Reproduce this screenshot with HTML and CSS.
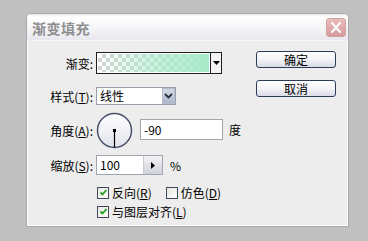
FILE: index.html
```html
<!DOCTYPE html>
<html>
<head>
<meta charset="utf-8">
<link rel="stylesheet" href="styles.css">
</head>
<body>
<div class="dialog">
  <div class="titlebar">
    <span class="title">渐变填充</span>
    <span class="close">
      <svg width="20" height="19" viewBox="0 0 20 19"><path d="M5.5 4.5 L14.5 14.5 M14.5 4.5 L5.5 14.5" stroke="#fff" stroke-width="2.2" stroke-linecap="round"/></svg>
    </span>
  </div>
  <div class="body">
    <div class="form">
      <div class="row r1">
        <span class="label">渐变:</span>
        <span class="grad">
          <span class="swatch"></span>
          <span class="gradarrow"><svg width="7" height="4" viewBox="0 0 7 4"><path d="M0 0 H7 L3.5 4 Z" fill="#000"/></svg></span>
        </span>
      </div>
      <div class="row r2">
        <span class="label">样式(<u>T</u>):</span>
        <span class="select">
          <span class="seltext">线性</span>
          <span class="selbtn"><svg width="9" height="6" viewBox="0 0 9 6"><path d="M1 1 L4.5 4.5 L8 1" fill="none" stroke="#2a2f45" stroke-width="1.8"/></svg></span>
        </span>
      </div>
      <div class="row r3">
        <span class="label">角度(<u>A</u>):</span>
        <svg class="dial" width="37" height="37" viewBox="0 0 37 37">
          <defs>
            <linearGradient id="dg" x1="0" y1="0" x2="0" y2="1">
              <stop offset="0" stop-color="#ffffff"/>
              <stop offset="1" stop-color="#e2e4ec"/>
            </linearGradient>
          </defs>
          <circle cx="18.5" cy="18.5" r="17" fill="url(#dg)" stroke="#4a5068" stroke-width="1.5"/>
          <rect x="17" y="17" width="3" height="3" fill="#000"/>
          <path d="M18.5 18.5 V35.5" stroke="#000" stroke-width="1.2"/>
        </svg>
        <span class="input angle">-90</span>
        <span class="unit">度</span>
      </div>
      <div class="row r4">
        <span class="label">缩放(<u>S</u>):</span>
        <span class="scale">
          <span class="scaletext">100</span>
          <span class="scalebtn"><svg width="4" height="7" viewBox="0 0 4 7"><path d="M0 0 L4 3.5 L0 7 Z" fill="#000"/></svg></span>
        </span>
        <span class="pct">%</span>
      </div>
      <div class="row r5">
        <span class="label"></span>
        <span class="check on"><svg width="9" height="9" viewBox="0 0 9 9"><path d="M1.5 4.5 L3.5 6.5 L7.5 2" fill="none" stroke="#22a022" stroke-width="1.8"/></svg></span>
        <span class="ctext">反向(<u>R</u>)</span>
        <span class="check off"></span>
        <span class="ctext">仿色(<u>D</u>)</span>
      </div>
      <div class="row r6">
        <span class="label"></span>
        <span class="check on"><svg width="9" height="9" viewBox="0 0 9 9"><path d="M1.5 4.5 L3.5 6.5 L7.5 2" fill="none" stroke="#22a022" stroke-width="1.8"/></svg></span>
        <span class="ctext">与图层对齐(<u>L</u>)</span>
      </div>
    </div>
    <div class="buttons">
      <span class="btn">确定</span>
      <span class="btn second">取消</span>
    </div>
  </div>
</div>
</body>
</html>
```

FILE: styles.css
```css
html, body {
  margin: 0;
  padding: 0;
}
body {
  width: 368px;
  height: 241px;
  background: #c0c0c0;
  font-family: "Noto Sans CJK SC", "DejaVu Sans", sans-serif;
  font-size: 12px;
  color: #000;
  padding: 13px 0 0 26px;
  box-sizing: border-box;
  overflow: hidden;
}
.dialog {
  width: 323px;
  height: 214px;
  box-sizing: border-box;
  border: 1px solid #a9a9ab;
  border-radius: 5px 5px 0 0;
  background: #ececec;
  display: flex;
  flex-direction: column;
}
.titlebar {
  height: 26px;
  flex: none;
  display: flex;
  align-items: center;
  justify-content: space-between;
  padding: 0 2px 0 5px;
  border-radius: 4px 4px 0 0;
  background: linear-gradient(#ececef 0px, #fefefe 3px, #f7f7f9 12px, #e8e8ee 26px);
}
.title {
  font-size: 14px;
  font-weight: bold;
  color: #8e8e8e;
  letter-spacing: 0.5px;
  line-height: 16px;
  margin-top: 1px;
}
.close {
  width: 20px;
  height: 19px;
  box-sizing: border-box;
  border-radius: 3px;
  background: linear-gradient(#ebbcbc, #d89a9a);
  border: 1px solid #d0a2a2;
  display: flex;
  align-items: center;
  justify-content: center;
  margin-top: 1px;
}
.close svg { display: block; }
.body {
  flex: 1;
  display: flex;
  border-left: 1px solid #ffffff;
  border-right: 1px solid #ffffff;
  border-bottom: 1px solid #ffffff;
  border-top: 1px solid #f6f6f6;
  background: #ededed;
}
.form {
  display: flex;
  flex-direction: column;
  padding-top: 11px;
}
.row {
  display: flex;
  align-items: center;
}
.label {
  width: 65px;
  text-align: right;
  padding-right: 3px;
  flex: none;
  white-space: nowrap;
}
u { text-decoration: underline; text-underline-offset: 1px; }
.r1 { height: 22px; }
.r2 { height: 18px; margin-top: 13px; }
.r3 { height: 37px; margin-top: 7px; }
.r4 { height: 20px; margin-top: 6px; }
.r5 { height: 15px; margin-top: 10px; }
.r6 { height: 15px; margin-top: 4px; }
.grad {
  width: 126px;
  height: 22px;
  box-sizing: border-box;
  border: 1px solid #1e1e1e;
  display: flex;
  background: #fff;
}
.swatch {
  flex: 1;
  border: 1px solid #fff;
  background:
    linear-gradient(90deg, rgba(166,235,201,0) 0%, rgba(166,235,201,0.55) 45%, rgba(166,235,201,1) 100%),
    conic-gradient(#d4d4d4 25%, #ffffff 0 50%, #d4d4d4 0 75%, #ffffff 0) 0 0 / 8px 8px;
}
.gradarrow {
  width: 10px;
  border-left: 1px solid #1e1e1e;
  display: flex;
  align-items: center;
  justify-content: center;
  background: #f4f4f4;
}
.gradarrow svg { display: block; }
.select {
  width: 80px;
  height: 18px;
  box-sizing: border-box;
  border: 1px solid #9aa0ac;
  background: #fff;
  display: flex;
  align-items: center;
}
.seltext {
  flex: 1;
  padding-left: 3px;
  line-height: 16px;
}
.selbtn {
  width: 13px;
  height: 16px;
  box-sizing: border-box;
  border: 1px solid #b5bccc;
  background: linear-gradient(#d4d9e6, #aeb6cb);
  display: flex;
  align-items: center;
  justify-content: center;
}
.selbtn svg { display: block; }
.dial {
  display: block;
  flex: none;
  margin-left: 0;
}
.input {
  box-sizing: border-box;
  border: 1px solid #a0a4ae;
  background: #fff;
  height: 21px;
  line-height: 19px;
  padding-left: 3px;
}
.angle {
  width: 83px;
  margin-left: 7px;
  margin-top: -3px;
}
.unit {
  margin-left: 6px;
  margin-top: -2px;
}
.scale {
  width: 67px;
  height: 20px;
  box-sizing: border-box;
  border: 1px solid #a0a4ae;
  background: #fff;
  display: flex;
  align-items: center;
}
.scaletext {
  flex: 1;
  padding-left: 3px;
  line-height: 18px;
}
.scalebtn {
  width: 19px;
  height: 18px;
  box-sizing: border-box;
  border-left: 1px solid #c8ccd6;
  background: linear-gradient(#f4f4f6, #cfd2da);
  display: flex;
  align-items: center;
  justify-content: center;
}
.scalebtn svg { display: block; }
.pct { margin-left: 7px; }
.check {
  width: 12px;
  height: 12px;
  box-sizing: border-box;
  border: 1px solid #3f4a5a;
  background: linear-gradient(135deg, #e6e6e0, #ffffff);
  display: flex;
  align-items: center;
  justify-content: center;
  flex: none;
  margin-left: 1px;
}
.check svg { display: block; }
.check.off { margin-left: 14px; }
.ctext {
  margin-left: 3px;
  white-space: nowrap;
}
.buttons {
  margin-left: auto;
  margin-right: 11px;
  padding-top: 10px;
  display: flex;
  flex-direction: column;
}
.btn {
  width: 80px;
  height: 17px;
  box-sizing: border-box;
  border: 1px solid #2c3b58;
  border-radius: 3px;
  background: linear-gradient(#ffffff 0%, #f3f3f6 50%, #d9dbe6 100%);
  text-align: center;
  line-height: 15px;
  font-size: 12px;
}
.btn.second { margin-top: 12px; }
```
